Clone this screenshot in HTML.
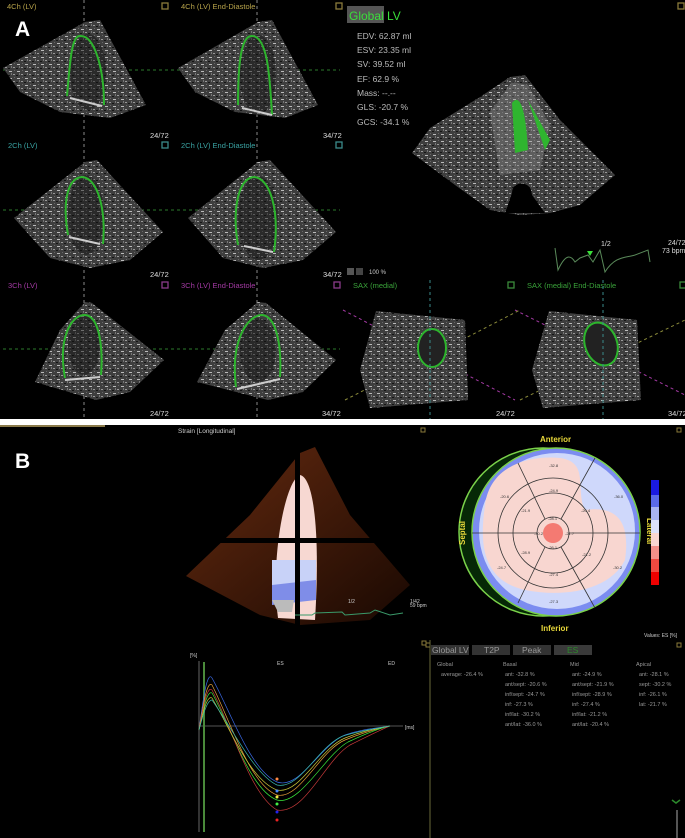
<!DOCTYPE html>
<html><head><meta charset="utf-8"><style>
html,body{margin:0;padding:0;background:#000;width:685px;height:838px;overflow:hidden}
svg{display:block}
text{font-family:"Liberation Sans","DejaVu Sans",sans-serif}
</style></head><body>
<svg width="685" height="838" viewBox="0 0 685 838" xmlns="http://www.w3.org/2000/svg">
<defs>
<pattern id="spk" width="8" height="7" patternUnits="userSpaceOnUse">
<rect width="8" height="7" fill="#3e3e3e"/><rect x="1" y="1" width="3" height="1" fill="#bbb"/><rect x="5" y="4" width="2" height="1" fill="#999"/><rect x="3" y="3" width="1" height="2" fill="#777"/><rect x="6" y="0" width="1" height="1" fill="#666"/><rect x="0" y="5" width="2" height="1" fill="#151515"/>
</pattern>
<linearGradient id="org" x1="0" y1="0" x2="1" y2="1"><stop offset="0" stop-color="#a8461a"/><stop offset="1" stop-color="#2a0e03"/></linearGradient>
</defs>
<rect width="685" height="838" fill="#000"/>

<g stroke="#888" stroke-dasharray="3,3" stroke-width="1">
<line x1="84" y1="0" x2="84" y2="419"/><line x1="257" y1="0" x2="257" y2="419"/>
</g>
<g stroke="#2c7a2c" stroke-dasharray="3,3" stroke-width="1">
<line x1="3" y1="70" x2="340" y2="70"/><line x1="3" y1="210" x2="340" y2="210"/><line x1="3" y1="349" x2="340" y2="349"/>
</g>

<g fill="url(#spk)">
<polygon points="3,68 85,22 100,20 146,105 110,118 60,112 20,92"/>
<polygon points="178,68 258,22 272,20 318,105 285,118 235,112 195,92"/>
<polygon points="14,218 85,162 97,160 163,232 130,260 90,268 50,258"/>
<polygon points="188,218 258,162 270,160 336,232 303,260 263,268 223,258"/>
<polygon points="35,382 60,330 85,302 92,303 164,360 130,392 96,400"/>
<polygon points="197,382 225,330 258,302 266,303 336,360 303,392 268,400"/>
</g>
<g fill="#111" opacity="0.45">
<ellipse cx="88" cy="72" rx="18" ry="38"/><ellipse cx="258" cy="75" rx="18" ry="40"/>
<ellipse cx="86" cy="215" rx="18" ry="40"/><ellipse cx="258" cy="218" rx="20" ry="42"/>
<ellipse cx="84" cy="345" rx="16" ry="30"/><ellipse cx="258" cy="350" rx="18" ry="32"/>
</g>
<g fill="none" stroke="#2db52d" stroke-width="2">
<path d="M67,96 C70,60 72,35 80,36 C95,35 104,70 104,105"/>
<path d="M238,105 C238,70 240,35 252,36 C268,36 270,80 272,115"/>
<path d="M68,235 C62,200 68,178 82,177 C98,178 106,210 103,244"/>
<path d="M238,245 C232,210 238,178 254,177 C270,178 280,210 274,252"/>
<path d="M65,378 C58,340 70,315 85,315 C100,316 103,350 101,375"/>
<path d="M236,387 C230,340 248,315 262,315 C276,316 282,345 280,377"/>
</g>
<g stroke="#ccc" stroke-width="2"><line x1="70" y1="98" x2="102" y2="106"/><line x1="242" y1="108" x2="272" y2="115"/><line x1="69" y1="237" x2="100" y2="244"/><line x1="244" y1="246" x2="273" y2="252"/><line x1="65" y1="380" x2="100" y2="377"/><line x1="237" y1="389" x2="280" y2="379"/></g>

<g font-size="7.5">
<text x="7" y="9" fill="#b7a34a">4Ch (LV)</text><text x="181" y="9" fill="#b7a34a">4Ch (LV) End-Diastole</text>
<text x="8" y="148" fill="#3aa3a3">2Ch (LV)</text><text x="181" y="148" fill="#3aa3a3">2Ch (LV) End-Diastole</text>
<text x="8" y="288" fill="#a43aa4">3Ch (LV)</text><text x="181" y="288" fill="#a43aa4">3Ch (LV) End-Diastole</text>
<text x="353" y="288" fill="#3aa33a">SAX (medial)</text><text x="527" y="288" fill="#3aa33a">SAX (medial) End-Diastole</text>
<g fill="#ddd"><text x="150" y="138">24/72</text><text x="323" y="138">34/72</text><text x="150" y="277">24/72</text><text x="323" y="277">34/72</text><text x="150" y="416">24/72</text><text x="322" y="416">34/72</text><text x="496" y="416">24/72</text><text x="668" y="416">34/72</text></g>
</g>
<g fill="none" stroke-width="1.3">
<rect x="162" y="3" width="6" height="6" stroke="#8a7a3a"/><rect x="336" y="3" width="6" height="6" stroke="#8a7a3a"/>
<rect x="162" y="142" width="6" height="6" stroke="#3a8a8a"/><rect x="336" y="142" width="6" height="6" stroke="#3a8a8a"/>
<rect x="162" y="282" width="6" height="6" stroke="#8a3a8a"/><rect x="334" y="282" width="6" height="6" stroke="#8a3a8a"/>
<rect x="508" y="282" width="6" height="6" stroke="#3a8a3a"/><rect x="680" y="282" width="6" height="6" stroke="#3a8a3a"/>
<rect x="678" y="3" width="6" height="6" stroke="#8a7a3a"/>
</g>
<text x="15" y="36" fill="#fff" font-size="21" font-weight="bold">A</text>

<rect x="347" y="6" width="37" height="17" fill="#555"/>
<text x="349" y="20" fill="#3adf3a" font-size="12">Global LV</text>
<g fill="#bbb" font-size="8.5">
<text x="357" y="39">EDV: 62.87 ml</text><text x="357" y="53">ESV: 23.35 ml</text><text x="357" y="67">SV: 39.52 ml</text><text x="357" y="82">EF: 62.9 %</text><text x="357" y="96">Mass: --.--</text><text x="357" y="110">GLS: -20.7 %</text><text x="357" y="125">GCS: -34.1 %</text>
</g>
<polygon points="412,153 430,128 480,97 510,77 525,75 560,120 615,175 580,205 550,213 520,215 490,210 455,185" fill="url(#spk)"/>
<polygon points="490,112 512,82 528,85 550,125 540,170 500,175" fill="#999" opacity="0.35"/>
<path d="M512,103 C518,95 525,100 528,150 L515,153 Z" fill="#2fb52f"/>
<path d="M528,100 L550,140 L545,150 Z" fill="#2fb52f"/>
<path d="M512,193 C512,180 532,180 532,195 L545,213 L505,213 Z" fill="#000"/>

<g fill="none" stroke="#5a8a5a" stroke-width="1"><path d="M555,248 L558,270 C565,255 570,254 575,262 L580,258 L588,255 L593,262 L600,250 L605,272 C615,256 625,258 635,255 L648,250 L650,262"/></g>
<polygon points="587,251 593,251 590,256" fill="#3adf3a"/>
<text x="601" y="246" fill="#ddd" font-size="7">1/2</text>
<text x="668" y="245" fill="#ddd" font-size="7">24/72</text><text x="662" y="253" fill="#ddd" font-size="7">73 bpm</text>
<rect x="347" y="268" width="7" height="7" fill="#555"/><rect x="356" y="268" width="7" height="7" fill="#444"/><text x="369" y="274" fill="#ccc" font-size="6">100 %</text>

<g stroke="#a43aa4" stroke-dasharray="3,3" fill="none"><line x1="343" y1="310" x2="515" y2="400"/><line x1="515" y1="310" x2="685" y2="395"/></g>
<g stroke="#8a8a3a" stroke-dasharray="3,3" fill="none"><line x1="345" y1="400" x2="520" y2="310"/><line x1="520" y1="400" x2="685" y2="320"/></g>
<polygon points="376,311 465,320 468,400 370,408 360,370" fill="url(#spk)"/>
<polygon points="549,311 637,320 641,400 543,408 532,370" fill="url(#spk)"/>
<ellipse cx="432" cy="348" rx="14" ry="19" fill="#222" stroke="#2db52d" stroke-width="2"/>
<ellipse cx="601" cy="344" rx="16" ry="22" transform="rotate(-20 601 344)" fill="#222" stroke="#2db52d" stroke-width="2"/>
<g stroke="#3a8a8a" stroke-dasharray="3,3"><line x1="430" y1="280" x2="430" y2="419"/><line x1="603" y1="280" x2="603" y2="419"/></g>

<rect x="0" y="419" width="685" height="6" fill="#fff"/>
<rect x="0" y="425" width="105" height="2" fill="#8a7a4a"/>

<text x="15" y="468" fill="#fff" font-size="21" font-weight="bold">B</text>
<text x="178" y="433" fill="#ccc" font-size="6.5">Strain [Longitudinal]</text>
<rect x="421" y="428" width="4" height="4" fill="none" stroke="#8a7a3a"/><rect x="677" y="428" width="4" height="4" fill="none" stroke="#8a7a3a"/>
<polygon points="186,576 250,515 300,453 315,447 350,515 410,585 370,620 300,625 260,615" fill="url(#org)" opacity="0.6"/>
<path d="M278,618 C270,560 285,480 300,475 C315,478 320,540 315,620 Z" fill="#f7d8d2"/>
<path d="M272,560 L316,560 L316,600 L272,600 Z" fill="#c8d2f8"/>
<path d="M272,585 L316,580 L316,600 L272,605 Z" fill="#7f8de8"/>
<path d="M272,600 L294,600 L292,612 L278,612 Z" fill="#bbb"/>
<rect x="213" y="538" width="200" height="5" fill="#000"/><rect x="295" y="450" width="5" height="180" fill="#000"/>
<path d="M295,615 L312,615 L315,613 L342,612 L345,615 L370,613 L375,610 L390,615 L403,613" fill="none" stroke="#3a9a6a"/>
<text x="348" y="603" fill="#ccc" font-size="5">1/2</text><text x="410" y="603" fill="#ccc" font-size="5">1/42</text><text x="410" y="607" fill="#ccc" font-size="5">59 bpm</text>

<g stroke="#aaa" stroke-width="0.6" fill="none"><line x1="199" y1="661" x2="199" y2="832"/><line x1="199" y1="726" x2="403" y2="726"/></g>
<line x1="204" y1="662" x2="204" y2="832" stroke="#4a8a3a" stroke-width="2"/>
<text x="190" y="657" fill="#ccc" font-size="5">[%]</text><text x="277" y="665" fill="#ccc" font-size="5">ES</text><text x="388" y="665" fill="#ccc" font-size="5">ED</text><text x="405" y="729" fill="#ccc" font-size="5">[ms]</text>
<g fill="none" stroke-width="0.7">
<path d="M199,730 C203,700 207,670 212,678 C230,710 250,770 277,782 C300,790 320,745 345,735 C365,728 380,728 390,726" stroke="#3a6ae8"/>
<path d="M199,730 C203,705 207,680 212,685 C230,720 250,785 277,795 C300,800 320,750 345,740 C365,732 380,728 390,726" stroke="#e8a03a"/>
<path d="M199,730 C203,710 207,690 212,693 C230,725 250,790 277,800 C300,806 325,755 348,742 C365,734 380,728 390,726" stroke="#3ae83a"/>
<path d="M199,730 C203,708 207,685 212,690 C230,722 250,795 277,810 C305,815 325,760 350,745 C368,736 380,730 390,726" stroke="#c83a3a"/>
<path d="M199,730 C203,712 207,695 212,698 C230,728 250,780 277,790 C300,795 320,748 345,738 C365,730 380,728 390,726" stroke="#c8c83a"/>
<path d="M199,730 C203,715 207,700 212,700 C232,728 255,775 277,785 C300,790 318,746 343,736 C362,730 380,728 390,726" stroke="#3ab8a8"/>
</g>
<g><circle cx="277" cy="779" r="1.5" fill="#f84"/><circle cx="277" cy="791" r="1.5" fill="#48f"/><circle cx="277" cy="797" r="1.5" fill="#ee4"/><circle cx="277" cy="804" r="1.5" fill="#4e4"/><circle cx="277" cy="812" r="1.5" fill="#22e"/><circle cx="277" cy="820" r="1.5" fill="#e22"/></g>
<rect x="422" y="641" width="4" height="4" fill="none" stroke="#8a7a3a"/>

<!-- Bull's eye -->
<circle cx="543" cy="532" r="84" fill="#062806" stroke="#7ad14a" stroke-width="1.5"/>
<circle cx="556" cy="532" r="84" fill="#7b8cf0" stroke="#7ad14a" stroke-width="1.5"/>
<circle cx="557" cy="531" r="78" fill="#cfd8fb"/>
<path d="M485,505 C490,465 530,455 560,458 C590,462 575,490 585,510 C620,505 630,525 625,560 C610,590 565,598 525,590 C480,580 480,540 485,505 Z" fill="#f8d6d0"/>
<circle cx="553" cy="533" r="10" fill="#f47a72"/>
<g fill="none" stroke="#333" stroke-width="0.8">
<circle cx="553" cy="533" r="16"/><circle cx="553" cy="533" r="40"/><circle cx="553" cy="533" r="55"/>
<line x1="472" y1="533" x2="537" y2="533"/><line x1="569" y1="533" x2="640" y2="533"/>
<line x1="518" y1="463" x2="545" y2="519"/><line x1="595" y1="458" x2="561" y2="519"/>
<line x1="518" y1="603" x2="545" y2="547"/><line x1="595" y1="608" x2="561" y2="547"/>
</g>
<g fill="#333" font-size="4"><text x="549" y="467">-32.8</text><text x="549" y="492">-24.9</text><text x="500" y="498">-20.6</text><text x="521" y="512">-21.9</text><text x="581" y="512">-20.4</text><text x="614" y="498">-36.0</text><text x="548" y="520">-28.1</text><text x="534" y="535">-30.2</text><text x="565" y="535">-21.7</text><text x="548" y="549">-26.1</text><text x="521" y="554">-28.9</text><text x="582" y="556">-21.2</text><text x="497" y="569">-24.7</text><text x="613" y="569">-30.2</text><text x="549" y="576">-27.4</text><text x="549" y="603">-27.3</text></g>
<g fill="#e8d83a" font-size="8" font-weight="bold"><text x="540" y="442">Anterior</text><text x="541" y="631">Inferior</text>
<text x="465" y="545" transform="rotate(-90 465 545)">Septal</text><text x="647" y="518" transform="rotate(90 647 518)">Lateral</text></g>
<rect x="651" y="480" width="8" height="15" fill="#1a1ae0"/><rect x="651" y="495" width="8" height="12" fill="#5a6ae8"/><rect x="651" y="507" width="8" height="13" fill="#a8b4f0"/><rect x="651" y="520" width="8" height="13" fill="#dde2fa"/><rect x="651" y="533" width="8" height="13" fill="#fad6d0"/><rect x="651" y="546" width="8" height="13" fill="#f49088"/><rect x="651" y="559" width="8" height="13" fill="#ef4a40"/><rect x="651" y="572" width="8" height="13" fill="#e00"/>
<text x="644" y="637" fill="#ccc" font-size="5">Values: ES [%]</text>

<rect x="426" y="643" width="4" height="4" fill="none" stroke="#8a7a3a"/><rect x="677" y="643" width="4" height="4" fill="none" stroke="#8a7a3a"/>
<line x1="430" y1="640" x2="430" y2="838" stroke="#6a6a3a"/>
<rect x="431" y="645" width="38" height="10" fill="#333"/><text x="432" y="653" fill="#999" font-size="8.5">Global LV</text>
<rect x="472" y="645" width="38" height="10" fill="#333"/><text x="484" y="653" fill="#999" font-size="8.5">T2P</text>
<rect x="513" y="645" width="38" height="10" fill="#333"/><text x="522" y="653" fill="#999" font-size="8.5">Peak</text>
<rect x="554" y="645" width="38" height="10" fill="#3a3a3a"/><text x="567" y="653" fill="#2c8a2c" font-size="8.5">ES</text>
<g fill="#999" font-size="5.5">
<text x="437" y="666">Global</text><text x="503" y="666">Basal</text><text x="570" y="666">Mid</text><text x="636" y="666">Apical</text>
<text x="441" y="676">average: -26.4 %</text>
<text x="505" y="676">ant: -32.8 %</text><text x="505" y="686">ant/sept: -20.6 %</text><text x="505" y="696">inf/sept: -24.7 %</text><text x="505" y="706">inf: -27.3 %</text><text x="505" y="716">inf/lat: -30.2 %</text><text x="505" y="726">ant/lat: -36.0 %</text>
<text x="572" y="676">ant: -24.9 %</text><text x="572" y="686">ant/sept: -21.9 %</text><text x="572" y="696">inf/sept: -28.9 %</text><text x="572" y="706">inf: -27.4 %</text><text x="572" y="716">inf/lat: -21.2 %</text><text x="572" y="726">ant/lat: -20.4 %</text>
<text x="639" y="676">ant: -28.1 %</text><text x="639" y="686">sept: -30.2 %</text><text x="639" y="696">inf: -26.1 %</text><text x="639" y="706">lat: -21.7 %</text>
</g>
<line x1="677" y1="810" x2="677" y2="838" stroke="#aaa"/>
<path d="M672,800 L676,803 L680,800" stroke="#2c8a2c" fill="none" stroke-width="1.5"/>
</svg>
</body></html>
